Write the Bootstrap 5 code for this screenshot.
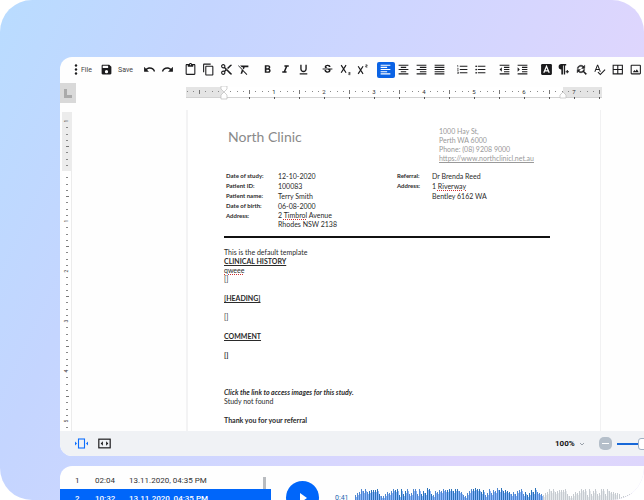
<!DOCTYPE html>
<html lang="en">
<head>
<meta charset="utf-8">
<meta name="viewport" content="width=device-width, initial-scale=1">
<title>North Clinic – report editor</title>
<link href="https://cdn.jsdelivr.net/npm/bootstrap@5.3.0/dist/css/bootstrap.min.css" rel="stylesheet">
<style>
body{background:#fff;font-family:Roboto,"Liberation Sans",sans-serif;font-size:8px;line-height:12px;color:#222}
.stage{height:100vh;border-radius:32px;padding:57px 0 0 60px;background:linear-gradient(115deg,#b9dcff 0%,#c4d5ff 24%,#ced6ff 45%,#dfd6fd 78%,#ddd6fc 100%)}
.editor{border-radius:12px 0 0 12px;background:#fefefe}
.tools{height:25px;padding-left:13px}
.tool{width:18px;height:16px;padding:0;border:0;background:none;color:#1c1c1e;border-radius:2px;display:inline-flex;align-items:center;justify-content:center}
.tool svg{width:13px;height:13px}
.tool.active{background:#0b63e5;color:#fff}
.label-btn{width:auto;font-size:7px;color:#444;gap:5px}
.label-btn svg{color:#1c1c1e}
.label-btn.file-btn{gap:2px}
.label-btn.file-btn svg{width:6px}
.push-a{margin-left:5px}.push-b{margin-left:6px}
.push-c{margin-left:8px}
svg{fill:currentColor;display:block}
.hruler-row{height:28px;padding-right:42px}
.tab-box{width:16px;height:20px;background:#d9d9d9;color:#aaa;margin:1px 110px 0 0}
.hruler{height:14px;margin-top:4px}
.vruler{width:11px;height:320px;margin:2px 0 0 2px}
.work{height:321px;padding-right:43px}
.sheet{margin-left:113px;border-left:2px solid #f3f3f4;border-right:1px solid #f1f1f2;background:#fff;font-family:Lato,"Noto Sans",sans-serif;font-size:7px;line-height:9px;padding:17px 50px 0 36px;color:#2a2a2a}
.clinic{font-size:14px;line-height:20px;color:#8a8a8a;margin:0 0 0 4px;font-weight:400}
.contact{color:#999;width:111px}
.contact a{color:#999}
.facts{line-height:10px;margin-left:2px}
.facts td,.facts th{padding:0;vertical-align:top;font-weight:700}
.facts th{font-size:6px}
.facts td{font-weight:400}
.facts-left th{width:52px}.facts-right th{width:35px}
.facts-right{width:155px}
.two-lines{line-height:9px}
.rule{border:0;border-top:2px solid #111;opacity:1;margin:7px 0 10px}
.typo{text-decoration:underline dotted #c33 1px}
.sheet p{margin:0 0 10px}
.sheet p.spaced{margin-bottom:28px}
.status{height:25px;background:#f0f2f5;border-radius:0 0 0 12px;padding-left:12px}
.zoom-select{border:0;background:none;font-weight:700;font-size:8px;color:#111;appearance:none;padding:0;width:20px}
.minus{width:13px;height:13px;border:0;border-radius:5px;background:#b5bfca;color:#fff;padding:0;margin-left:14px}
.zoom-range{appearance:none;width:54px;height:12px;background:linear-gradient(#1768d8,#1768d8) center/100% 2px no-repeat;margin:0 -27px 0 5px}
.zoom-range::-webkit-slider-thumb{appearance:none;width:12px;height:12px;border:1px solid #9fb0c4;border-radius:3px;background:#fff}
.player{margin-top:10px;border-radius:12px 0 0 0;background:#fefefe}
.takes{width:211px;margin:0;padding-top:6px}
.take-list{width:100%}
.take-list td{height:17px;padding:0;line-height:17px;color:#333}
.take-list td:first-child{width:35px;padding-left:15px}
.take-list td:nth-child(2){width:34px}
.take-list tr.current td{background:#0066fa;color:#fff;font-weight:500;height:18px}
.take-list .scroll-cell{width:8px}
.take-list .scroll-cell div{width:3px;height:12px;margin-top:5px;background:#b9bcc0}
.play{width:33px;height:33px;border:0;border-radius:50%;background:#0066fa;color:#fff;margin:15px 0 0 15px;padding:0}
.clock{margin:26px 0 0 16px;width:20px;font-size:7px;color:#2767b0}
.wave{height:13px;margin-top:21px}
</style>
</head>
<body>
<div class="stage overflow-hidden d-flex flex-column">
<main class="editor overflow-hidden flex-shrink-0">
  <div class="tools d-flex align-items-center" role="toolbar" aria-label="Formatting">
    <button class="tool label-btn file-btn"><svg viewBox="6 0 12 24"><circle cx="12" cy="4" r="2.4"/><circle cx="12" cy="12" r="2.4"/><circle cx="12" cy="20" r="2.4"/></svg>File</button>
    <button class="tool label-btn push-c"><svg viewBox="0 0 24 24"><path d="M17 3H5c-1.1 0-2 .9-2 2v14c0 1.1.9 2 2 2h14c1.100 0 2-.9 2-2V7l-4-4zm-5 16a3 3 0 1 1 0-6 3 3 0 0 1 0 6zm3-10H5V5h10v4z"/></svg>Save</button>
    <button class="tool push-c" aria-label="Undo"><svg viewBox="0 0 24 24"><path d="M12.5 8c-2.65 0-5.05.99-6.9 2.600L2 7v9h9l-3.620-3.620c1.390-1.160 3.160-1.880 5.120-1.880 3.540 0 6.550 2.310 7.600 5.500l2.370-.78C21.080 11.030 17.150 8 12.500 8z"/></svg></button>
    <button class="tool" aria-label="Redo"><svg viewBox="0 0 24 24"><path d="M18.400 10.600C16.550 8.990 14.150 8 11.500 8c-4.650 0-8.580 3.030-9.960 7.220L3.900 16c1.050-3.190 4.050-5.500 7.600-5.500 1.950 0 3.730.72 5.120 1.880L13 16h9V7l-3.600 3.600z"/></svg></button>
    <button class="tool push-a" aria-label="Paste"><svg viewBox="0 0 24 24"><path d="M19 2h-4.180C14.400.84 13.300 0 12 0c-1.300 0-2.400.84-2.820 2H5c-1.100 0-2 .9-2 2v16c0 1.100.9 2 2 2h14c1.100 0 2-.9 2-2V4c0-1.100-.9-2-2-2zm-7 0a1 1 0 1 1 0 2 1 1 0 0 1 0-2zm7 18H5V4h2v3h10V4h2v16z"/></svg></button>
    <button class="tool" aria-label="Copy"><svg viewBox="0 0 24 24"><path d="M16 1H4c-1.100 0-2 .9-2 2v14h2V3h12V1zm3 4H8c-1.100 0-2 .9-2 2v14c0 1.100.9 2 2 2h11c1.100 0 2-.9 2-2V7c0-1.100-.9-2-2-2zm0 16H8V7h11v14z"/></svg></button>
    <button class="tool" aria-label="Cut"><svg viewBox="0 0 24 24"><path d="M9.640 7.640c.23-.5.36-1.050.36-1.640 0-2.210-1.790-4-4-4S2 3.790 2 6s1.790 4 4 4c.59 0 1.140-.13 1.640-.36L10 12l-2.360 2.360C7.140 14.130 6.590 14 6 14c-2.210 0-4 1.790-4 4s1.790 4 4 4 4-1.790 4-4c0-.59-.13-1.140-.36-1.640L12 14l7 7h3v-1L9.640 7.640zM6 8a2 2 0 1 1 0-4 2 2 0 0 1 0 4zm0 12a2 2 0 1 1 0-4 2 2 0 0 1 0 4zm6-7.500a.5.5 0 1 1 0-1 .5.5 0 0 1 0 1zM19 3l-6 6 2 2 7-7V3z"/></svg></button>
    <button class="tool" aria-label="Clear formatting"><svg viewBox="0 0 24 24"><path d="M3.270 4L2 5.270l6.970 6.970L6.500 20h3l1.570-4.660L17.730 22 19 20.730 3.550 5.270 3.270 4zM6 4v1.200L8.820 8h2.400l-.72 1.680 2.100 2.100L14.210 8H21V4.500H6z"/></svg></button>
    <button class="tool push-b" aria-label="Bold"><svg viewBox="0 0 24 24"><path d="M15.600 10.790c.97-.67 1.650-1.770 1.650-2.790 0-2.260-1.750-4-4-4H7v14h7.040c2.090 0 3.710-1.700 3.710-3.790 0-1.520-.86-2.820-2.150-3.420zM10 6.500h3a1.500 1.500 0 0 1 0 3h-3v-3zm3.500 9H10v-3h3.500a1.500 1.500 0 0 1 0 3z"/></svg></button>
    <button class="tool" aria-label="Italic"><svg viewBox="0 0 24 24"><path d="M10 4v3h2.210l-3.420 8H6v3h8v-3h-2.210l3.420-8H18V4z"/></svg></button>
    <button class="tool" aria-label="Underline"><svg viewBox="0 0 24 24"><path d="M12 17c3.310 0 6-2.690 6-6V3h-2.500v8a3.500 3.500 0 0 1-7 0V3H6v8c0 3.310 2.690 6 6 6zm-7 2v2h14v-2H5z"/></svg></button>
    <button class="tool push-b" aria-label="Strikethrough"><svg viewBox="0 0 24 24"><path d="M6.850 7.080C6.850 4.370 9.450 3 12.240 3c1.640 0 3 .49 3.900 1.280.77.65 1.460 1.730 1.460 3.240h-3.010c0-.31-.05-.59-.15-.85-.29-.86-1.200-1.280-2.250-1.280-1.860 0-2.340 1.020-2.340 1.700 0 .48.25.88.74 1.210.38.25.77.48 1.410.7H7.390c-.21-.34-.54-.89-.54-1.920zM21 12v-2H3v2h9.620c1.150.45 1.960.75 1.960 1.970 0 1-.81 1.670-2.280 1.670-1.540 0-2.930-.54-2.930-2.510H6.400c0 .55.08 1.130.24 1.580.81 2.290 3.290 3.300 5.670 3.300 2.270 0 5.300-.89 5.300-4.050 0-.3-.01-1.160-.48-1.940H21V12z"/></svg></button>
    <button class="tool" aria-label="Subscript"><svg viewBox="0 0 24 24"><path fill="none" stroke="currentColor" stroke-width="2.200" d="M4 4l9 14M13 4L4 18"/><path fill="none" stroke="currentColor" stroke-width="1.300" d="M17.500 17.500h3v2h-2.500v2h3"/></svg></button>
    <button class="tool" aria-label="Superscript"><svg viewBox="0 0 24 24"><path fill="none" stroke="currentColor" stroke-width="2.200" d="M4 6l9 14M13 6L4 20"/><path fill="none" stroke="currentColor" stroke-width="1.300" d="M17.500 3.500h3v2h-2.500v2h3"/></svg></button>
    <button class="tool active push-a" aria-label="Align left"><svg viewBox="0 0 24 24"><path d="M15 15H3v2h12v-2zm0-8H3v2h12V7zM3 13h18v-2H3v2zm0 8h18v-2H3v2zM3 3v2h18V3H3z"/></svg></button>
    <button class="tool" aria-label="Align centre"><svg viewBox="0 0 24 24"><path d="M7 15v2h10v-2H7zm-4 6h18v-2H3v2zm0-8h18v-2H3v2zm4-6v2h10V7H7zM3 3v2h18V3H3z"/></svg></button>
    <button class="tool" aria-label="Align right"><svg viewBox="0 0 24 24"><path d="M3 21h18v-2H3v2zm6-4h12v-2H9v2zm-6-4h18v-2H3v2zm6-4h12V7H9v2zM3 3v2h18V3H3z"/></svg></button>
    <button class="tool" aria-label="Justify"><svg viewBox="0 0 24 24"><path d="M3 21h18v-2H3v2zm0-4h18v-2H3v2zm0-4h18v-2H3v2zm0-4h18V7H3v2zm0-6v2h18V3H3z"/></svg></button>
    <button class="tool push-b" aria-label="Numbered list"><svg viewBox="0 0 24 24"><path d="M2 17h2v.5H3v1h1v.5H2v1h3v-4H2v1zm1-9h1V4H2v1h1v3zm-1 3h1.800L2 13.100v.9h3v-1H3.200L5 10.900V10H2v1zm5-6v2h14V5H7zm0 14h14v-2H7v2zm0-6h14v-2H7v2z"/></svg></button>
    <button class="tool" aria-label="Bulleted list"><svg viewBox="0 0 24 24"><circle cx="4" cy="6" r="1.600"/><circle cx="4" cy="12" r="1.600"/><circle cx="4" cy="18" r="1.600"/><path d="M7 5h14v2H7zM7 11h14v2H7zM7 17h14v2H7z"/></svg></button>
    <button class="tool push-b" aria-label="Decrease indent"><svg viewBox="0 0 24 24"><path d="M11 17h10v-2H11v2zm-8-5l4 4V8l-4 4zm0 9h18v-2H3v2zM3 3v2h18V3H3zm8 6h10V7H11v2zm0 4h10v-2H11v2z"/></svg></button>
    <button class="tool" aria-label="Increase indent"><svg viewBox="0 0 24 24"><path d="M3 21h18v-2H3v2zM3 8v8l4-4-4-4zm8 9h10v-2H11v2zM3 3v2h18V3H3zm8 6h10V7H11v2zm0 4h10v-2H11v2z"/></svg></button>
    <button class="tool push-b" aria-label="Text colour"><svg viewBox="0 0 24 24"><rect x="2" y="2" width="20" height="20" rx="2"/><path fill="none" stroke="#fff" stroke-width="2.300" d="M7 18l5-12 5 12M8.500 14.500h7"/></svg></button>
    <button class="tool" aria-label="Paragraph"><svg viewBox="0 0 24 24"><path d="M8 12a4.500 4.500 0 0 1 0-10h9v2.500h-2V21h-2.500V4.500h-1.500V21H8zM18 13h2v2h2v2h-2v2h-2v-2h-2v-2h2z"/></svg></button>
    <button class="tool" aria-label="Find and replace"><svg viewBox="0 0 24 24"><path stroke="currentColor" stroke-width=".8" d="M11 6c1.380 0 2.630.56 3.540 1.460L12 10h6V4l-2.050 2.050C14.680 4.780 12.930 4 11 4c-3.530 0-6.430 2.610-6.920 6H6.100c.46-2.280 2.480-4 4.900-4zm5.640 9.140c.66-.9 1.120-1.970 1.280-3.140H15.900c-.46 2.280-2.480 4-4.900 4-1.380 0-2.630-.56-3.540-1.460L10 12H4v6l2.050-2.050C7.320 17.220 9.070 18 11 18c1.550 0 2.980-.51 4.140-1.360L20 21.490 21.490 20l-4.850-4.860z"/></svg></button>
    <button class="tool" aria-label="Spelling"><svg viewBox="0 0 24 24"><path d="M12.450 16h2.090L9.430 3H7.570L2.460 16h2.090l1.120-3h5.640l1.140 3zm-6.020-5L8.500 5.480 10.570 11H6.430zm15.160.59l-8.090 8.090L9.830 16l-1.410 1.410 5.090 5.090L23 13l-1.410-1.410z"/></svg></button>
    <button class="tool" aria-label="Table"><svg viewBox="0 0 24 24"><path fill="none" stroke="currentColor" stroke-width="2" d="M4 4h17v16H4zM12.500 4v16M4 12h17"/></svg></button>
    <button class="tool" aria-label="Image"><svg viewBox="0 0 24 24"><rect x="4" y="4" width="17" height="16" rx="1" fill="none" stroke="currentColor" stroke-width="2"/><path d="M7 17l3-4 2 2 2.500-3.500L18 17z"/></svg></button>
  </div>

  <div class="hruler-row d-flex">
    <div class="tab-box d-flex align-items-center justify-content-center flex-shrink-0"><svg width="8" height="9" viewBox="0 0 8 9"><path d="M0 0h3v6h5v3H0z"/></svg></div>
    <div class="flex-grow-1 overflow-hidden"><svg class="hruler" id="hruler" width="416" height="14" role="img" aria-label="Horizontal ruler"></svg></div>
  </div>

  <div class="work d-flex overflow-hidden">
    <svg class="vruler flex-shrink-0" id="vruler" role="img" aria-label="Vertical ruler"></svg>
    <article class="sheet flex-grow-1">
      <header class="d-flex justify-content-between">
        <h1 class="clinic">North Clinic</h1>
        <address class="contact mb-0">1000 Hay St,<br>Perth WA 6000<br>Phone: (08) 9208 9000<br><a href="#">https://www.northclinicl.net.au</a></address>
      </header>
      <div class="d-flex justify-content-between pt-2">
        <table class="facts facts-left">
          <tr><th scope="row">Date of study:</th><td>12-10-2020</td></tr>
          <tr><th scope="row">Patient ID:</th><td>100083</td></tr>
          <tr><th scope="row">Patient name:</th><td>Terry Smith</td></tr>
          <tr><th scope="row">Date of birth:</th><td>06-08-2000</td></tr>
          <tr class="two-lines"><th scope="row">Address:</th><td>2 <span class="typo">Timbrol</span> Avenue<br>Rhodes NSW 2138</td></tr>
        </table>
        <div class="facts-right"><table class="facts">
          <tr><th scope="row">Referral:</th><td>Dr Brenda Reed</td></tr>
          <tr><th scope="row">Address:</th><td>1 <span class="typo">Riverway</span><br>Bentley 6162 WA</td></tr>
        </table></div>
      </div>
      <hr class="rule">
      <p>This is the default template<br><b><u>CLINICAL HISTORY</u></b><br><span class="typo">qweee</span><br>[]</p>
      <p><b><u>[HEADING]</u></b></p>
      <p>[]</p>
      <p><b><u>COMMENT</u></b></p>
      <p class="spaced"><b>[]</b></p>
      <p><b><i>Click the link to access images for this study.</i></b><br>Study not found</p>
      <p><b>Thank you for your referral</b></p>
    </article>
  </div>

  <footer class="status d-flex align-items-center">
    <button class="tool fit-width text-primary" aria-label="Fit width"><svg viewBox="0 0 26 24"><path d="M0 8l4 4-4 4zM26 8l-4 4 4 4z"/><rect x="7" y="3" width="12" height="18" fill="none" stroke="currentColor" stroke-width="2.200"/></svg></button>
    <button class="tool push-a" aria-label="Fit page"><svg viewBox="0 0 24 24"><rect x="1.500" y="4" width="21" height="16" fill="none" stroke="currentColor" stroke-width="2.200"/><path d="M9 8l-4 4 4 4zM15 8l4 4-4 4z"/></svg></button>
    <div class="ms-auto d-flex align-items-center">
      <select class="zoom-select" aria-label="Zoom"><option>100%</option></select>
      <svg class="ms-1" width="6" height="6" viewBox="0 0 6 6"><path fill="none" stroke="#9aa1aa" d="M1 2l2 2 2-2"/></svg>
      <button class="minus" aria-label="Zoom out"><svg width="13" height="13" viewBox="0 0 13 13"><path d="M3 6h7v1H3z"/></svg></button>
      <input class="zoom-range" type="range" aria-label="Zoom level" value="50">
    </div>
  </footer>
</main>

<section class="player d-flex flex-grow-1 overflow-hidden">
  <div class="takes flex-shrink-0">
    <table class="take-list">
      <tr><td>1</td><td>02:04</td><td>13.11.2020, 04:35 PM</td><td class="scroll-cell"><div></div></td></tr>
      <tr class="current"><td>2</td><td>10:32</td><td>13.11.2020, 04:35 PM</td><td class="scroll-cell"></td></tr>
    </table>
  </div>
  <button class="play flex-shrink-0" aria-label="Play"><svg width="33" height="33" viewBox="0 0 33 33"><path d="M14 12l7 5-7 5z"/></svg></button>
  <div class="clock flex-shrink-0">0:41</div>
  <svg class="wave flex-grow-1" id="wave" role="img" aria-label="Waveform"></svg>
</section>
</div>
<script>
// Ruler ticks: eight per inch, a number on each inch, 50px to the inch
function ruler(id, vertical, origin, end, light) {
  let s = '';
  const r = (along, across, l, a, c) => vertical
    ? `<rect x="${across}" y="${along}" width="${a}" height="${l}" fill="${c}"/>`
    : `<rect x="${along}" y="${across}" width="${l}" height="${a}" fill="${c}"/>`;
  s += vertical ? r(0, 0, end, 10, '#ececec') : r(0, 1, end, 11, '#d2d2d2') + r(0, 1, end, 10, '#e4e4e4');
  s += r(origin, vertical ? 0 : 1, light - origin, vertical ? 9 : 10, '#fff');
  for (let i = -8; i < 64; i++) {
    const p = Math.round(origin + i * 6.25);
    if (p < 1 || p > end - 1 || i === 0) continue;
    if (i % 8 === 0) {
      s += vertical
        ? `<text transform="translate(6 ${p}) rotate(-90)" text-anchor="middle" font-size="5" fill="#333">${Math.abs(i / 8)}</text>`
        : `<text x="${p}" y="8" text-anchor="middle" font-size="6" fill="#333">${Math.abs(i / 8)}</text>`;
    } else if (i % 4 === 0) s += r(p, 4, 1, vertical ? 3 : 4, '#777');
    else s += r(p, vertical ? 4 : 5, 1, vertical ? 2 : 1, '#888');
    if (!vertical && i % 4 === 0 && i > 0) s += r(p, 11, 1, 2, '#555');
  }
  if (!vertical) s += '<path fill="#fff" stroke="#bbb" stroke-width=".7" d="M35 0h6v3l-3 3-3-3zM35 13V9l3-3 3 3v4zM374 12V9l3-3 3 3v3z"/>';
  document.getElementById(id).innerHTML = s;
}
ruler('hruler', false, 38, 416, 377);
ruler('vruler', true, 59, 320, 320);

// Waveform: played part in blue, the rest in grey
const levels = [5,7,8,11,9,11,8,9,10,10,10,11,6,4,4,6,8,7,9,11,10,11,5,11,6,9,11,6,7,11,11,6,11,6,9,7,12,11,6,5,9,8,10,9,11,10,10,11,11,9,11,11,9,8,5,4,7,9,11,11,12,11,11,8,10,5,7,11,7,10,9,12,10,12,9,10,9,8,6,8,6,9,10,11,6,8,5,7,10,8,12,8,7,6];
let w = '';
for (let i = 0; i < 144; i++) {
  const played = i < 94;
  let h = levels[i % 94];
  if (i > 126) h = Math.max(2, Math.round((144 - i) / 2));
  const y = i > 132 ? 11 - Math.round((i - 132) * .8) : 13 - h;
  w += `<rect x="${i * 2}" y="${y}" width="1" height="${i > 132 ? 3 : h}" fill="${played ? (i % 13 > 6 ? '#2b72b8' : '#4f86cf') : '#c6cbd0'}"/>`;
  if (i <= 130) w += `<rect x="${i * 2 + 1}" y="${15 - h}" width="1" height="${h}" fill="${played ? '#8db7fb' : '#e6e9ec'}"/>`;
}
document.getElementById('wave').innerHTML = w;
</script>
<script src="https://cdn.jsdelivr.net/npm/bootstrap@5.3.0/dist/js/bootstrap.bundle.min.js"></script>
</body>
</html>
